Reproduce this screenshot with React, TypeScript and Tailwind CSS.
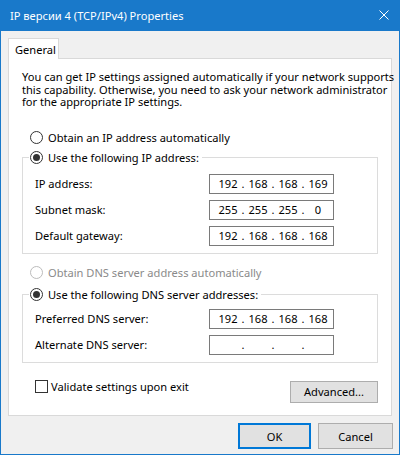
import React from "react";

const FONT = { fontFamily: '"Noto Sans", "Segoe UI", sans-serif' };

function Radio({ checked, disabled }: { checked?: boolean; disabled?: boolean }) {
  return (
    <span
      className={`flex h-[13px] w-[13px] shrink-0 items-center justify-center rounded-full border bg-white ${
        disabled ? "border-[#bcbcbc]" : "border-[#333333]"
      }`}
    >
      {checked && <span className="h-[7px] w-[7px] rounded-full bg-[#333333]" />}
    </span>
  );
}

function IpBox({ parts }: { parts?: string[] }) {
  const p = parts ?? ["", "", "", ""];
  return (
    <div className="flex h-[20px] w-[125px] items-center border border-[#7a7a7a] bg-white pl-[6px]">
      {p.map((v, i) => (
        <React.Fragment key={i}>
          {i > 0 && <span className="w-[6px] text-center">.</span>}
          <span className="w-[24px] text-center">{v}</span>
        </React.Fragment>
      ))}
    </div>
  );
}

function Row({ label, parts }: { label: string; parts?: string[] }) {
  return (
    <div className="flex h-[20px] items-center">
      <span className="w-[186px] pl-[12px]">{label}</span>
      <IpBox parts={parts} />
    </div>
  );
}

export default function App() {
  return (
    <div
      className="flex h-[455px] w-[400px] flex-col border-x border-b border-[#1979ca] bg-[#f0f0f0] text-[11.1px] leading-[13px] text-black"
      style={FONT}
    >
      <div className="flex h-[31px] shrink-0 items-center justify-between bg-[#1979ca] pl-[9px] pr-[10px] text-white">
        <span>IP версии 4 (TCP/IPv4) Properties</span>
        <svg width="10" height="10" viewBox="0 0 10 10" className="mb-[1px]">
          <path d="M0.5 0.5 L9.5 9.5 M9.5 0.5 L0.5 9.5" stroke="white" strokeWidth="1" fill="none" />
        </svg>
      </div>
      <div className="flex flex-col px-[7px] pt-[7px]">
        <div className="relative z-10 -mb-px flex h-[21px] w-[51px] items-center border border-b-0 border-[#d9d9d9] bg-white pl-[6px]">
          General
        </div>
        <div className="flex h-[358px] w-[384px] flex-col border border-[#d9d9d9] bg-white px-[13px] pt-[12px]">
          <p className="whitespace-nowrap leading-[12.5px]">
            You can get IP settings assigned automatically if your network supports
            <br />
            this capability. Otherwise, you need to ask your network administrator
            <br />
            for the appropriate IP settings.
          </p>
          <div className="mt-[21px] flex h-[16px] items-center gap-[5px] pl-[8px]">
            <Radio />
            <span>Obtain an IP address automatically</span>
          </div>
          <fieldset className="mt-[4px] border border-[#dcdcdc] p-0">
            <legend className="ml-[6px] flex h-[16px] items-center gap-[5px] px-[1px]">
              <Radio checked />
              <span className="pr-[2px]">Use the following IP address:</span>
            </legend>
            <div className="flex flex-col gap-[6px] pb-[7px] pt-[8px]">
              <Row label="IP address:" parts={["192", "168", "168", "169"]} />
              <Row label="Subnet mask:" parts={["255", "255", "255", "0"]} />
              <Row label="Default gateway:" parts={["192", "168", "168", "168"]} />
            </div>
          </fieldset>
          <div className="mt-[11px] flex h-[16px] items-center gap-[5px] pl-[8px] text-[#8a8a8a]">
            <Radio disabled />
            <span>Obtain DNS server address automatically</span>
          </div>
          <fieldset className="mt-[6px] border border-[#dcdcdc] p-0">
            <legend className="ml-[6px] flex h-[16px] items-center gap-[5px] px-[1px]">
              <Radio checked />
              <span className="pr-[2px]">Use the following DNS server addresses:</span>
            </legend>
            <div className="flex flex-col gap-[6px] pb-[7px] pt-[6px]">
              <Row label="Preferred DNS server:" parts={["192", "168", "168", "168"]} />
              <Row label="Alternate DNS server:" />
            </div>
          </fieldset>
          <div className="mt-[16px] flex items-start justify-between">
            <div className="flex h-[16px] items-center gap-[3px] pl-[13px]">
              <span className="h-[13px] w-[13px] border border-[#333333] bg-white" />
              <span>Validate settings upon exit</span>
            </div>
            <button className="mt-[2px] flex h-[22px] w-[88px] items-center justify-center border border-[#adadad] bg-[#e1e1e1]">
              Advanced...
            </button>
          </div>
        </div>
        <div className="-mr-px mt-[7px] flex justify-end gap-[7px]">
          <button className="flex h-[26px] w-[73px] items-center justify-center border-2 border-[#0078d7] bg-[#e1e1e1]">
            OK
          </button>
          <button className="flex h-[26px] w-[75px] items-center justify-center border border-[#adadad] bg-[#e1e1e1]">
            Cancel
          </button>
        </div>
      </div>
    </div>
  );
}
